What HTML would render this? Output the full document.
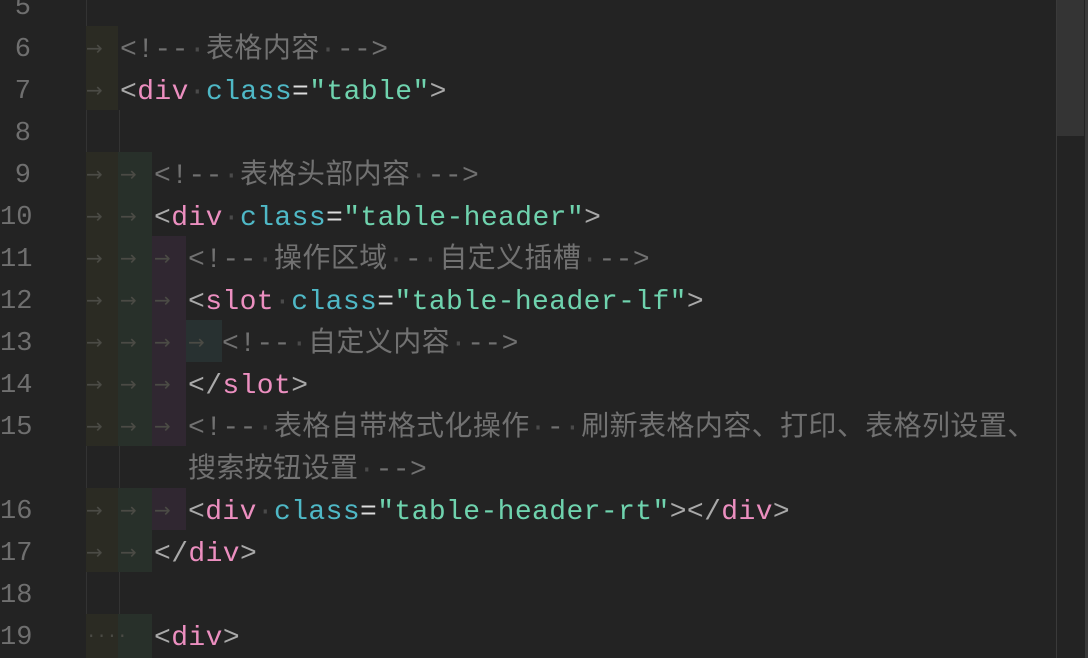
<!DOCTYPE html>
<html><head><meta charset="utf-8"><style>
html,body{margin:0;padding:0;background:#232323;width:1088px;height:658px;overflow:hidden;position:relative}
.ln{position:absolute;left:0;width:31px;text-align:right;font:27px "Liberation Mono",monospace;color:#6f6f6f;height:42px;line-height:42px;margin-top:3px}
.t{position:absolute;height:42px;line-height:42px;margin-top:4px;font-family:"Liberation Mono","Noto Sans CJK SC",monospace;font-size:28px;letter-spacing:0.4px;white-space:pre;color:#a9a9a9}
.c{color:#717171}
.k{color:#ec8fc0}
.a{color:#4fb8c6}
.s{color:#6fd3ae}
.e{color:#ddd}
.d{color:#4a4a4a}
.b{position:absolute;height:42px}
.y{background:#2b2b23}.g{background:#28302a}.p{background:#302731}.q{background:#283131}
.ar{position:absolute;left:86px;height:42px;line-height:42px;margin-top:10px;color:#4b4b45;font:20px "DejaVu Sans",sans-serif;white-space:nowrap}
.ar span{display:inline-block;width:34px}
.gl{position:absolute;width:1px;background:#333}
</style></head><body>
<div class="gl" style="left:86px;top:0;height:658px"></div>
<div class="gl" style="left:119px;top:110px;height:548px"></div>
<div class="b y" style="left:86px;top:26px;width:32px;height:84px"></div>
<div class="b y" style="left:86px;top:152px;width:32px;height:294px"></div>
<div class="b y" style="left:86px;top:488px;width:32px;height:84px"></div>
<div class="b g" style="left:118px;top:152px;width:34px;height:294px"></div>
<div class="b g" style="left:118px;top:488px;width:34px;height:84px"></div>
<div class="b p" style="left:152px;top:236px;width:34px;height:210px"></div>
<div class="b p" style="left:152px;top:488px;width:34px;height:42px"></div>
<div class="b q" style="left:186px;top:320px;width:36px;height:42px"></div>
<div class="b g" style="left:118px;top:614px;width:34px;height:44px"></div>
<div class="b y" style="left:86px;top:614px;width:32px;height:44px"></div>

<div class="ln" style="top:-16px">5</div>
<div class="ln" style="top:26px">6</div>
<div class="ln" style="top:68px">7</div>
<div class="ln" style="top:110px">8</div>
<div class="ln" style="top:152px">9</div>
<div class="ln" style="top:194px">10</div>
<div class="ln" style="top:236px">11</div>
<div class="ln" style="top:278px">12</div>
<div class="ln" style="top:320px">13</div>
<div class="ln" style="top:362px">14</div>
<div class="ln" style="top:404px">15</div>
<div class="ln" style="top:488px">16</div>
<div class="ln" style="top:530px">17</div>
<div class="ln" style="top:572px">18</div>
<div class="ln" style="top:614px">19</div>

<div class="ar" style="top:26px"><span>→</span></div>
<div class="ar" style="top:68px"><span>→</span></div>
<div class="ar" style="top:152px"><span>→</span><span>→</span></div>
<div class="ar" style="top:194px"><span>→</span><span>→</span></div>
<div class="ar" style="top:236px"><span>→</span><span>→</span><span>→</span></div>
<div class="ar" style="top:278px"><span>→</span><span>→</span><span>→</span></div>
<div class="ar" style="top:320px"><span>→</span><span>→</span><span>→</span><span>→</span></div>
<div class="ar" style="top:362px"><span>→</span><span>→</span><span>→</span></div>
<div class="ar" style="top:404px"><span>→</span><span>→</span><span>→</span></div>
<div class="ar" style="top:488px"><span>→</span><span>→</span><span>→</span></div>
<div class="ar" style="top:530px"><span>→</span><span>→</span></div>
<div class="ar" style="top:614px;left:88px;letter-spacing:4px">····</div>

<div class="t c" style="left:120px;top:26px">&lt;!--<span class="d">·</span>表格内容<span class="d">·</span>--&gt;</div>
<div class="t" style="left:120px;top:68px">&lt;<span class="k">div</span><span class="d">·</span><span class="a">class</span><span class="e">=</span><span class="s">"table"</span>&gt;</div>
<div class="t c" style="left:154px;top:152px">&lt;!--<span class="d">·</span>表格头部内容<span class="d">·</span>--&gt;</div>
<div class="t" style="left:154px;top:194px">&lt;<span class="k">div</span><span class="d">·</span><span class="a">class</span><span class="e">=</span><span class="s">"table-header"</span>&gt;</div>
<div class="t c" style="left:188px;top:236px">&lt;!--<span class="d">·</span>操作区域<span class="d">·</span>-<span class="d">·</span>自定义插槽<span class="d">·</span>--&gt;</div>
<div class="t" style="left:188px;top:278px">&lt;<span class="k">slot</span><span class="d">·</span><span class="a">class</span><span class="e">=</span><span class="s">"table-header-lf"</span>&gt;</div>
<div class="t c" style="left:222px;top:320px">&lt;!--<span class="d">·</span>自定义内容<span class="d">·</span>--&gt;</div>
<div class="t" style="left:188px;top:362px">&lt;/<span class="k">slot</span>&gt;</div>
<div class="t c" style="left:188px;top:404px">&lt;!--<span class="d">·</span>表格自带格式化操作<span class="d">·</span>-<span class="d">·</span>刷新表格内容、打印、表格列设置、</div>
<div class="t c" style="left:188px;top:446px">搜索按钮设置<span class="d">·</span>--&gt;</div>
<div class="t" style="left:188px;top:488px">&lt;<span class="k">div</span><span class="d">·</span><span class="a">class</span><span class="e">=</span><span class="s">"table-header-rt"</span>&gt;&lt;/<span class="k">div</span>&gt;</div>
<div class="t" style="left:154px;top:530px">&lt;/<span class="k">div</span>&gt;</div>
<div class="t" style="left:154px;top:614px">&lt;<span class="k">div</span>&gt;</div>

<div style="position:absolute;left:1056px;top:0;width:1px;height:658px;background:#3a3a3a"></div>
<div style="position:absolute;left:1057px;top:0;width:27px;height:136px;background:#343434"></div>
<div style="position:absolute;left:1085px;top:0;width:3px;height:658px;background:#3a3a3a"></div>
</body></html>
